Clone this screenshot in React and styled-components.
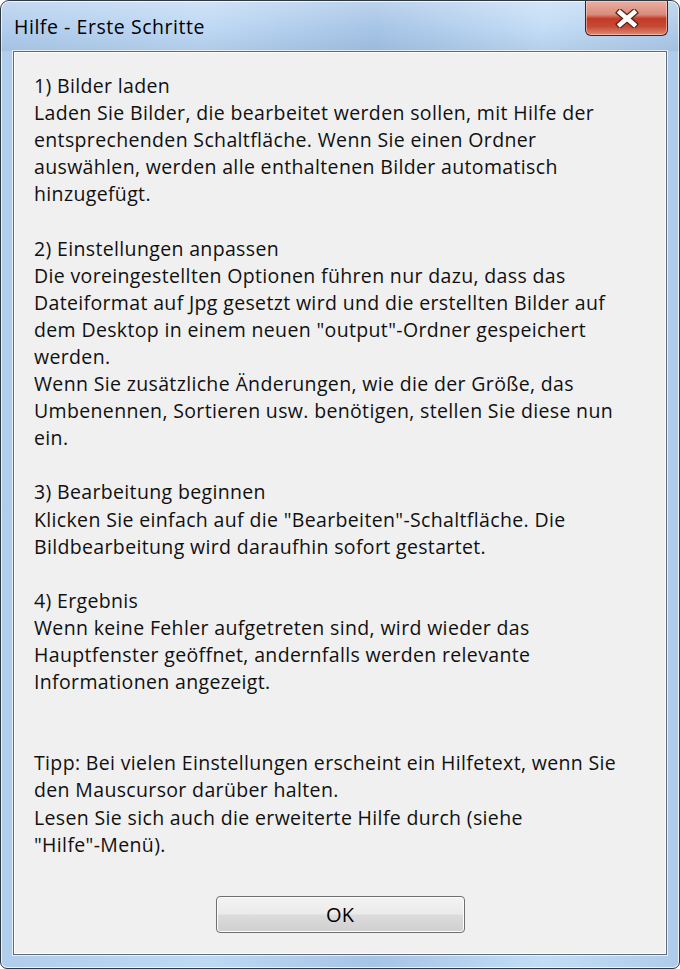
import React from "react";
import styled, { createGlobalStyle } from "styled-components";

const Global = createGlobalStyle`
  html, body { margin: 0; padding: 0; background: #ffffff; }
  body { width: 680px; height: 969px; overflow: hidden; }
`;

const Window = styled.div`
  box-sizing: border-box;
  width: 680px;
  height: 969px;
  display: flex;
  flex-direction: column;
  border: 1px solid #2f3740;
  border-radius: 9px 9px 7px 7px;
  background: linear-gradient(90deg, #b1cdec 0%, #bfd9f4 30%, #a6c4e6 55%, #c4ddf6 80%, #afcbea 100%);
  box-shadow: inset 0 0 0 1px rgba(255, 255, 255, 0.75);
  font-family: "Open Sans", "Noto Sans", sans-serif;
`;

const TitleBar = styled.div`
  height: 50px;
  display: flex;
  align-items: flex-start;
  justify-content: space-between;
  padding: 0 11px 0 13px;
  background: linear-gradient(180deg, rgba(255,255,255,0.25) 0%, rgba(255,255,255,0) 55%, rgba(110,140,175,0.18) 100%);
  border-radius: 8px 8px 0 0;
`;

const Title = styled.div`
  margin-top: 12px;
  font-size: 19.5px;
  color: #000;
  letter-spacing: 0.55px;
`;

const CloseButton = styled.div`
  box-sizing: border-box;
  width: 83px;
  height: 35px;
  display: flex;
  align-items: center;
  justify-content: center;
  border: 1px solid #4a1f18;
  border-top: none;
  border-radius: 0 0 6px 6px;
  background: linear-gradient(180deg, #eab0a3 0%, #d98b7b 40%, #c23a26 52%, #c74a35 75%, #dd8a74 100%);
  box-shadow: inset 0 0 0 1px rgba(255, 220, 210, 0.55);
`;

const Client = styled.div`
  flex: 1;
  display: flex;
  flex-direction: column;
  margin: 0 12px 13px 12px;
  border: 1px solid #5b6b7b;
  box-shadow: 0 0 0 1px rgba(255,255,255,0.7), inset 0 0 0 1px #ffffff;
  background: #f0f0f0;
  padding: 20px 20px 21px 20px;
`;

const Text = styled.div`
  font-size: 19.5px;
  line-height: 27.1px;
  color: #101010;
  letter-spacing: 0.35px;
`;

const Line = styled.div`
  white-space: pre;
  min-height: 27.1px;
`;

const Footer = styled.div`
  flex: 1;
  display: flex;
  align-items: flex-end;
  justify-content: center;
`;

const OkButton = styled.button`
  box-sizing: border-box;
  width: 249px;
  height: 37px;
  border: 1px solid #707070;
  border-radius: 4px;
  background: linear-gradient(180deg, #f3f3f3 0%, #ebebeb 48%, #dcdcdc 52%, #cfcfcf 100%);
  box-shadow: inset 0 0 0 1px #fcfcfc;
  font-family: "Open Sans", "Noto Sans", sans-serif;
  font-size: 20px;
  color: #000;
  padding: 0;
`;

const lines = [
  "1) Bilder laden",
  "Laden Sie Bilder, die bearbeitet werden sollen, mit Hilfe der",
  "entsprechenden Schaltfläche. Wenn Sie einen Ordner",
  "auswählen, werden alle enthaltenen Bilder automatisch",
  "hinzugefügt.",
  "",
  "2) Einstellungen anpassen",
  "Die voreingestellten Optionen führen nur dazu, dass das",
  "Dateiformat auf Jpg gesetzt wird und die erstellten Bilder auf",
  "dem Desktop in einem neuen \"output\"-Ordner gespeichert",
  "werden.",
  "Wenn Sie zusätzliche Änderungen, wie die der Größe, das",
  "Umbenennen, Sortieren usw. benötigen, stellen Sie diese nun",
  "ein.",
  "",
  "3) Bearbeitung beginnen",
  "Klicken Sie einfach auf die \"Bearbeiten\"-Schaltfläche. Die",
  "Bildbearbeitung wird daraufhin sofort gestartet.",
  "",
  "4) Ergebnis",
  "Wenn keine Fehler aufgetreten sind, wird wieder das",
  "Hauptfenster geöffnet, andernfalls werden relevante",
  "Informationen angezeigt.",
  "",
  "",
  "Tipp: Bei vielen Einstellungen erscheint ein Hilfetext, wenn Sie",
  "den Mauscursor darüber halten.",
  "Lesen Sie sich auch die erweiterte Hilfe durch (siehe",
  "\"Hilfe\"-Menü).",
];

function CloseIcon() {
  return (
    <svg width="24" height="19" viewBox="0 0 24 19">
      <path
        d="M5 3.5 L19 15.5 M19 3.5 L5 15.5"
        stroke="#5a2018"
        strokeWidth="7"
        strokeLinecap="square"
        fill="none"
      />
      <path
        d="M5 3.5 L19 15.5 M19 3.5 L5 15.5"
        stroke="#ffffff"
        strokeWidth="4.5"
        strokeLinecap="square"
        fill="none"
      />
    </svg>
  );
}

export default function App() {
  return (
    <>
      <Global />
      <Window>
        <TitleBar>
          <Title>Hilfe - Erste Schritte</Title>
          <CloseButton>
            <CloseIcon />
          </CloseButton>
        </TitleBar>
        <Client>
          <Text>
            {lines.map((l, i) => (
              <Line key={i}>{l}</Line>
            ))}
          </Text>
          <Footer>
            <OkButton>OK</OkButton>
          </Footer>
        </Client>
      </Window>
    </>
  );
}
